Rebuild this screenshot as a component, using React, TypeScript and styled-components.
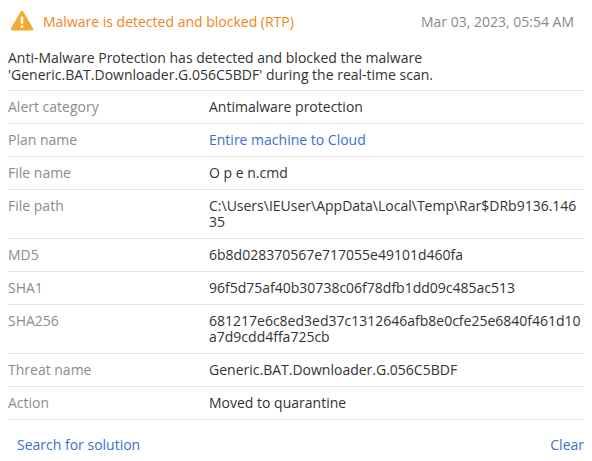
import React from "react";
import styled, { createGlobalStyle } from "styled-components";

const Global = createGlobalStyle`
  html, body { margin: 0; padding: 0; background: #fff; }
  body { font-family: "Open Sans", "Noto Sans", sans-serif; font-size: 14px; color: #333; }
`;

const Panel = styled.div`
  width: 576px;
  margin: 0 8px;
  display: flex;
  flex-direction: column;
`;

const Header = styled.div`
  display: flex;
  align-items: center;
  height: 42px;
  padding: 0 10px 0 2px;
`;

const Title = styled.div`
  flex: 1;
  display: flex;
  align-items: center;
  gap: 9px;
  color: #f58220;
`;

const DateText = styled.div`
  color: #8a8a8a;
`;

const Description = styled.div`
  line-height: 17px;
  padding: 7px 0 7px;
`;

const Table = styled.div`
  border-top: 1px solid #e3e3e3;
`;

const Row = styled.div`
  display: grid;
  grid-template-columns: 201px 1fr;
  padding: 8px 0;
  line-height: 16px;
  border-bottom: 1px solid #e3e3e3;
`;

const Label = styled.div`
  color: #8c8c8c;
`;

const Value = styled.div<{ $link?: boolean }>`
  color: ${(p) => (p.$link ? "#3a6fd6" : "#333")};
  word-break: break-all;
`;

const Footer = styled.div`
  display: flex;
  justify-content: space-between;
  padding: 15px 0 0 9px;
`;

const Link = styled.a`
  color: #3a6fd6;
  text-decoration: none;
  cursor: pointer;
`;

const WarningIcon = () => (
  <svg width="24" height="22" viewBox="0 0 24 22">
    <path
      d="M10.3 2.2 Q12 -0.6 13.7 2.2 L22.6 17.6 Q24.1 20.4 21 20.4 L3 20.4 Q-0.1 20.4 1.4 17.6 Z"
      fill="#f5a931"
    />
    <rect x="10.8" y="6.5" width="2.4" height="7.5" rx="1" fill="#fff" />
    <circle cx="12" cy="16.6" r="1.35" fill="#fff" />
  </svg>
);

const rows: { label: string; value: string; link?: boolean }[] = [
  { label: "Alert category", value: "Antimalware protection" },
  { label: "Plan name", value: "Entire machine to Cloud", link: true },
  { label: "File name", value: "O p e n.cmd" },
  { label: "File path", value: "C:\\Users\\IEUser\\AppData\\Local\\Temp\\Rar$DRb9136.14635" },
  { label: "MD5", value: "6b8d028370567e717055e49101d460fa" },
  { label: "SHA1", value: "96f5d75af40b30738c06f78dfb1dd09c485ac513" },
  { label: "SHA256", value: "681217e6c8ed3ed37c1312646afb8e0cfe25e6840f461d10a7d9cdd4ffa725cb" },
  { label: "Threat name", value: "Generic.BAT.Downloader.G.056C5BDF" },
  { label: "Action", value: "Moved to quarantine" },
];

export default function App() {
  return (
    <>
      <Global />
      <Panel>
        <Header>
          <Title>
            <WarningIcon />
            <span>Malware is detected and blocked (RTP)</span>
          </Title>
          <DateText>Mar 03, 2023, 05:54 AM</DateText>
        </Header>
        <Description>
          Anti-Malware Protection has detected and blocked the malware
          <br />
          'Generic.BAT.Downloader.G.056C5BDF' during the real-time scan.
        </Description>
        <Table>
          {rows.map((r) => (
            <Row key={r.label}>
              <Label>{r.label}</Label>
              <Value $link={r.link}>{r.value}</Value>
            </Row>
          ))}
        </Table>
        <Footer>
          <Link>Search for solution</Link>
          <Link>Clear</Link>
        </Footer>
      </Panel>
    </>
  );
}
